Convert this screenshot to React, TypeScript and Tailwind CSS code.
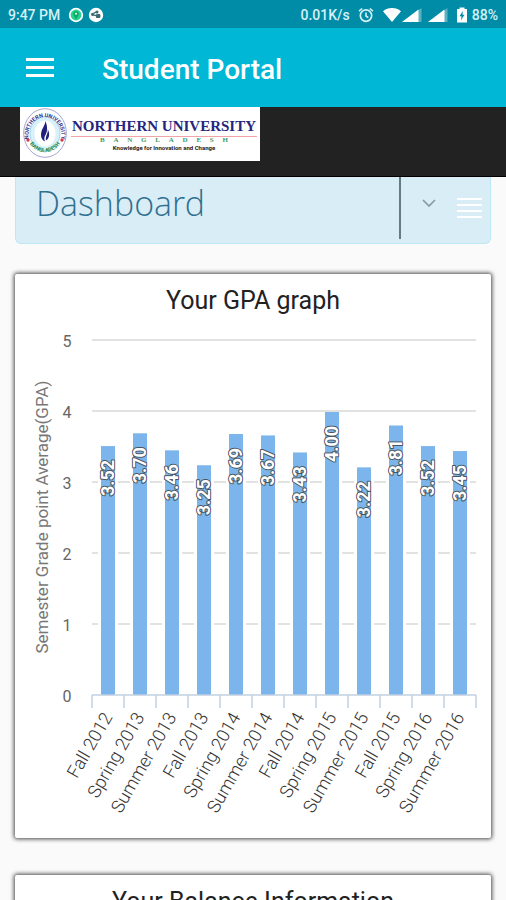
interface Semester {
  name: string;
  gpa: number;
}

const semesters: Semester[] = [
  { name: 'Fall 2012', gpa: 3.52 },
  { name: 'Spring 2013', gpa: 3.7 },
  { name: 'Summer 2013', gpa: 3.46 },
  { name: 'Fall 2013', gpa: 3.25 },
  { name: 'Spring 2014', gpa: 3.69 },
  { name: 'Summer 2014', gpa: 3.67 },
  { name: 'Fall 2014', gpa: 3.43 },
  { name: 'Spring 2015', gpa: 4.0 },
  { name: 'Summer 2015', gpa: 3.22 },
  { name: 'Fall 2015', gpa: 3.81 },
  { name: 'Spring 2016', gpa: 3.52 },
  { name: 'Summer 2016', gpa: 3.45 },
];

function LocationBadge() {
  return (
    <svg className="size-4" viewBox="0 0 16 16" aria-hidden="true">
      <circle cx="8" cy="8" r="7.2" fill="#fff" />
      <circle cx="8" cy="8" r="5.4" fill="#22d38f" />
      <path d="M8 12.6 5.6 8.2a2.7 2.7 0 1 1 4.8 0Z" fill="#0ea864" />
      <circle cx="8" cy="6.8" r="1" fill="#fff" />
    </svg>
  );
}

function ShareBadge() {
  return (
    <svg className="size-4" viewBox="0 0 16 16" aria-hidden="true">
      <circle cx="8" cy="8" r="7.2" fill="#fff" />
      <path d="M4 7.4 8.5 4.8M4.5 7.8 10.5 9" stroke="#3d6972" strokeWidth="1.3" />
      <circle cx="4.4" cy="7.5" r="1.4" fill="#3d6972" />
      <circle cx="9" cy="5" r="1.5" fill="#3d6972" />
      <rect x="8" y="6.9" width="4.4" height="4.2" rx="1.2" fill="#3d6972" />
    </svg>
  );
}

function AlarmIcon() {
  return (
    <svg className="size-4" viewBox="0 0 16 16" fill="none" stroke="currentColor" aria-hidden="true">
      <circle cx="8" cy="8.6" r="5.7" strokeWidth="1.7" />
      <path d="M8 5.6V9l2.3 1.7M1 4.2 4.2 1.5M15 4.2l-3.2-2.7" strokeWidth="1.6" />
    </svg>
  );
}

function WifiIcon() {
  return (
    <svg className="h-4 w-5" viewBox="0 0 20 16" fill="currentColor" aria-hidden="true">
      <path d="M10 15 1 4.2C3.6 2.2 6.6 1 10 1s6.4 1.2 9 3.2Z" />
    </svg>
  );
}

function SignalIcon() {
  return (
    <svg className="h-4 w-5" viewBox="0 0 20 16" fill="currentColor" aria-hidden="true">
      <path d="M0 15 19.5 1v14Z" opacity=".35" />
      <path d="M0 15 16.5 2.5V15Z" />
    </svg>
  );
}

function BatteryIcon() {
  return (
    <svg className="h-4 w-3" viewBox="0 0 12 16" aria-hidden="true">
      <path d="M3.5.5h5V2H11v13.5H1V2h2.5Z" fill="currentColor" />
      <path d="M6.8 4 3.5 9.2h2L5 13.2l3.5-5.4h-2Z" fill="#008ba7" />
    </svg>
  );
}

function StatusBar() {
  return (
    <div className="flex h-7 shrink-0 items-center justify-between bg-[#008ba7] px-2 pt-px text-sm font-medium text-[#d3f1f6]">
      <div className="flex items-center gap-1">
        <span className="mr-1">9:47 PM</span>
        <LocationBadge />
        <ShareBadge />
      </div>
      <div className="flex items-center">
        <span className="mr-2">0.01K/s</span>
        <AlarmIcon />
        <div className="ml-2 flex items-center text-white">
          <WifiIcon />
          <SignalIcon />
          <div className="ml-1.5 flex">
            <SignalIcon />
          </div>
          <div className="mr-1 ml-2 flex">
            <BatteryIcon />
          </div>
        </div>
        <span>88%</span>
      </div>
    </div>
  );
}

function AppBar() {
  return (
    <header className="flex h-[79px] shrink-0 items-center bg-[#00b8d6] px-[26px] text-white">
      <button type="button" aria-label="Open menu" className="flex w-7 flex-col gap-[5px]">
        <span className="h-[3px] w-full bg-white" />
        <span className="h-[3px] w-full bg-white" />
        <span className="h-[3px] w-full bg-white" />
      </button>
      <h1 className="ml-12 pt-1 text-[28px] font-medium">Student Portal</h1>
    </header>
  );
}

function UniversitySeal() {
  return (
    <svg className="h-[50px] w-11 shrink-0" viewBox="0 0 44 50" preserveAspectRatio="none" aria-hidden="true">
      <defs>
        <path id="seal-top" d="M6.4 33A16.5 18 0 1 1 37.6 33" />
        <path id="seal-bottom" d="M6.5 35A18.500 20 0 0 0 37.5 35" />
      </defs>
      <ellipse cx="22" cy="25" rx="21.3" ry="24.3" fill="#fff" stroke="#8d8fc4" strokeWidth=".8" />
      <ellipse cx="22" cy="25.500" rx="15" ry="17" fill="#d7f0fa" stroke="#9cc7e4" strokeWidth=".8" />
      <ellipse cx="22" cy="25.500" rx="10.5" ry="13" fill="#fff" />
      <text fontSize="5.5" fontWeight="700" fill="#35358c">
        <textPath href="#seal-top" startOffset="50%" textAnchor="middle">NORTHERN UNIVERSITY</textPath>
      </text>
      <text fontSize="5.5" fontWeight="700" fill="#178a4c">
        <textPath href="#seal-bottom" startOffset="50%" textAnchor="middle">BANGLADESH</textPath>
      </text>
      <circle cx="5" cy="32" r="1.7" fill="#d23a45" />
      <circle cx="39" cy="32" r="1.7" fill="#d23a45" />
      <path d="M22.5 13c-.5 5-4.5 8-4.5 14 0 3 1.5 5.5 4 6.5-1.5-3-.5-5 1-7.5 1.6-3.5 1.5-8-.5-13Z" fill="#20207c" />
      <path d="M24.5 21c1.5 4-2.5 6.5-1.5 11.5 3-1.5 4.5-7 1.5-11.5Z" fill="#20207c" />
    </svg>
  );
}

function UniversityBanner() {
  return (
    <div className="h-[70px] shrink-0 border-b border-black bg-[#222] px-5">
      <a href="#home" className="flex h-[54px] w-60 items-start gap-1 bg-white px-[3px] pt-px">
        <UniversitySeal />
        <span className="flex flex-1 flex-col items-center pt-2">
          <span className="w-full border-b border-[#f0a3a8] text-center font-['Liberation_Serif',serif] text-[15px] leading-5 font-bold whitespace-nowrap text-[#25257e]">
            NORTHERN UNIVERSITY
          </span>
          <span className="flex w-32 justify-between font-['Liberation_Serif',serif] text-[7px] leading-[7px] font-bold text-[#3f9b68]">
            {'BANGLADESH'.split('').map((letter, index) => (
              <span key={index}>{letter}</span>
            ))}
          </span>
          <span className="text-[6px] leading-[7px] font-bold whitespace-nowrap text-[#222]">
            Knowledge for Innovation and Change
          </span>
        </span>
      </a>
    </div>
  );
}

function DashboardPanel() {
  return (
    <div className="flex h-[67px] rounded-b-md border border-t-0 border-[#bce8f1] bg-[#d9edf7]">
      <h2 className="flex-1 pl-5 font-['Open_Sans_Light','Open_Sans',sans-serif] text-[34px] leading-[52px] font-light text-[#31708f]">
        Dashboard
      </h2>
      <div className="mb-1 flex items-start border-l-2 border-[#657b86] pt-5">
        <button type="button" aria-label="Expand dashboard" className="ml-[18px] flex h-3 w-5 items-center justify-center">
          <svg className="h-2 w-3.5" viewBox="0 0 14 8" fill="none" aria-hidden="true">
            <path d="m1 1 6 6 6-6" stroke="#869ba5" strokeWidth="1.7" />
          </svg>
        </button>
        <button type="button" aria-label="Show navigation" className="mt-px mr-2 ml-[18px] flex w-[25px] flex-col gap-1">
          <span className="h-0.5 w-full bg-white" />
          <span className="h-0.5 w-full bg-white" />
          <span className="h-0.5 w-full bg-white" />
          <span className="h-0.5 w-full bg-white" />
        </button>
      </div>
    </div>
  );
}

const BASELINE = 375;
const UNIT = 71;

function GpaChart() {
  return (
    <svg className="block w-full" viewBox="0 0 476 510" role="img" aria-label="GPA for each semester">
      {[1, 2, 3, 4, 5].map((value) => (
        <path key={value} d={`M77 ${BASELINE - value * UNIT}H461`} stroke="#e2e2e2" strokeWidth="2" />
      ))}
      {[0, 1, 2, 3, 4, 5].map((value) => (
        <text key={value} x="52" y={BASELINE - value * UNIT + 7} fontSize="16" textAnchor="middle" fill="#666">
          {value}
        </text>
      ))}
      <text
        transform="translate(33 197) rotate(-90)"
        fontSize="17"
        textAnchor="middle"
        fill="#777"
      >
        Semester Grade point Average(GPA)
      </text>

      {semesters.map(({ name, gpa }, index) => {
        const x = 93 + index * 32;
        const top = BASELINE - gpa * UNIT + 1;
        return (
          <g key={name}>
            <rect x={x - 10} y={top} width="20" height={BASELINE - top} fill="#fff" />
            <rect x={x - 7} y={top} width="14" height={BASELINE - top} fill="#7cb5ec" />
            <text
              transform={`translate(${x + 6} ${top + 50}) rotate(-90)`}
              fontSize="18"
              fontWeight="700"
              fill="#fff"
              stroke="#4a5560"
              strokeWidth="2"
              strokeLinejoin="round"
              paintOrder="stroke"
            >
              {gpa.toFixed(2)}
            </text>
            <text
              transform={`translate(${x + 5} 397) rotate(-60)`}
              fontSize="18"
              fontWeight="300"
              textAnchor="end"
              fill="#333"
            >
              {name}
            </text>
          </g>
        );
      })}

      <path d="M77 375H461" stroke="#c0d0e0" strokeWidth="1.5" />
      {Array.from({ length: 13 }, (_, index) => (
        <path key={index} d={`M${77 + index * 32} 375v13`} stroke="#c0d0e0" strokeWidth="1.5" />
      ))}
    </svg>
  );
}

export default function App() {
  return (
    <div className="flex h-screen flex-col overflow-hidden bg-[#fafafa] font-[Roboto,sans-serif]">
      <StatusBar />
      <AppBar />
      <UniversityBanner />

      <main className="min-h-0 flex-1 overflow-hidden px-[15px]">
        <DashboardPanel />

        <section className="mt-[30px] rounded-xs bg-white pb-2 shadow-[0_0_4px_1px_#444]">
          <h2 className="pt-2 text-center text-[25px] leading-[38px] text-[#222]">Your GPA graph</h2>
          <GpaChart />
        </section>

        <section className="mt-[37px] rounded-xs bg-white pb-10 shadow-[0_0_4px_1px_#444]">
          <h2 className="pt-2 text-center text-[25px] leading-[38px] text-[#222]">Your Balance Information</h2>
        </section>
      </main>
    </div>
  );
}
